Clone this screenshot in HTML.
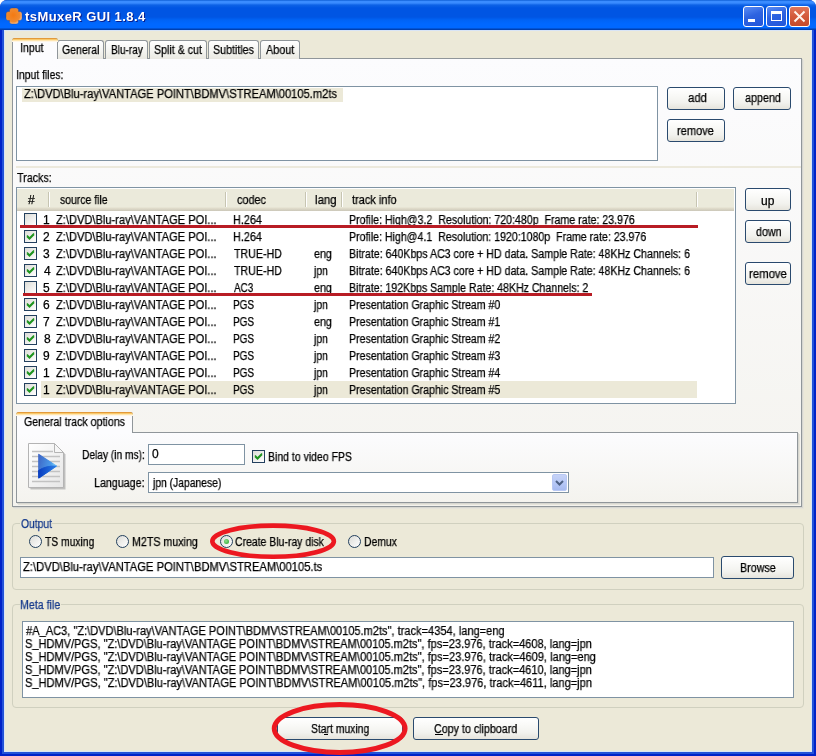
<!DOCTYPE html><html><head><meta charset="utf-8"><style>
*{margin:0;padding:0;box-sizing:border-box}
html,body{width:816px;height:756px;overflow:hidden;background:#fff}
body{position:relative;font-family:"Liberation Sans",sans-serif;font-size:11px;color:#000}
.a{position:absolute}
.t{position:absolute;white-space:pre;line-height:13px;font-size:12px;-webkit-text-stroke:0.25px #000;will-change:transform}
.btn{position:absolute;border:1px solid #2A4A6E;border-radius:3px;background:linear-gradient(180deg,#FFFFFF 0,#FAFAF8 30%,#F2F2EE 70%,#E6E4DC 100%)}
.tb{position:absolute;border:1px solid #7F93A3;background:#fff}
.grp{position:absolute;border:1px solid #D0D0BF;border-radius:4px}
.gap{position:absolute;height:3px;background:#ECE9D8}
.page{position:absolute;border:1px solid #90969A;background:linear-gradient(180deg,#FCFCFE 0,#F4F3EE 100%);box-shadow:1px 1px 0 #D6D6D0,2px 2px 0 #E6E4DA}
.tab{position:absolute;border:1px solid #90969A;border-bottom:none;border-radius:3px 3px 0 0;background:linear-gradient(180deg,#FFFFFF 0,#F3F3EF 60%,#EAE9E2 100%)}
.tabsel{position:absolute;border:1px solid #90969A;border-bottom:none;border-radius:3px 3px 0 0;background:#FCFCFE}
.tabsel:before{content:"";position:absolute;left:-1px;right:-1px;top:-1px;height:4px;background:linear-gradient(180deg,#E39A3A 0,#E39A3A 1px,#F9C86A 1px,#F9C86A 2px,#FFE6B0 2px,#FFE6B0 3px,#FFF6E6 3px);border-radius:3px 3px 0 0}
.cb{position:absolute;width:13px;height:13px;border:1px solid #23405E;background:linear-gradient(135deg,#DCDCD7 0,#FFFFFF 100%)}
.rd{position:absolute;width:13px;height:13px;border:1px solid #23405E;border-radius:50%;background:linear-gradient(135deg,#DCDCD7 0,#FFFFFF 100%)}
.sep{position:absolute;width:2px;border-left:1px solid #C7C5B2;border-right:1px solid #FFFFFF}
</style></head><body>
<div class="a" style="left:0;top:0;width:816px;height:756px;border-radius:7px 7px 0 0;background:#0022C8;"></div>
<div class="a" style="left:2px;top:20px;width:812px;height:734px;background:#2352D8"></div>
<div class="a" style="left:0;top:0;width:816px;height:30px;border-radius:7px 7px 0 0;background:linear-gradient(180deg,#0050C8 0,#3A8CFF 1px,#3A8CFF 3px,#0D62E6 5px,#0055E3 8px,#0055E3 17px,#0063F5 20px,#0068FF 24px,#0068FF 28px,#0040B0 29px,#0040B0 30px)"></div>
<div class="a" style="left:4px;top:30px;width:808px;height:722px;background:#ECE9D8;border:1px solid #D8E4F6"></div>
<svg class="a" style="left:5px;top:7px" width="18" height="18"><defs><radialGradient id="og" cx="0.45" cy="0.45" r="0.6"><stop offset="0" stop-color="#F47A12"/><stop offset="0.7" stop-color="#F08A30"/><stop offset="1" stop-color="#FFD0A8"/></radialGradient></defs>
<path d="M7 1 H11 Q13.5 1 13.5 3.5 V4.5 H14.5 Q17 4.5 17 7 V11 Q17 13.5 14.5 13.5 H13.5 V14.5 Q13.5 17 11 17 H7 Q4.5 17 4.5 14.5 V13.5 H3.5 Q1 13.5 1 11 V7 Q1 4.5 3.5 4.5 H4.5 V3.5 Q4.5 1 7 1 Z" fill="url(#og)" stroke="#1A3A8A" stroke-width="0.6" stroke-opacity="0.6"/></svg>
<div class="t" style="left:25px;top:7px;color:#fff;-webkit-text-stroke:0;font-weight:bold;font-size:13px;line-height:20px;letter-spacing:0.42px;text-shadow:1px 1px 0 #0A1E8C">tsMuxeR GUI 1.8.4</div>
<div class="a" style="left:743px;top:6px;width:21px;height:21px;border:1px solid #fff;border-radius:3px;background:linear-gradient(160deg,#5A8DF5 0,#2E63E0 45%,#2256DA 100%)"></div>
<div class="a" style="left:766px;top:6px;width:21px;height:21px;border:1px solid #fff;border-radius:3px;background:linear-gradient(160deg,#5A8DF5 0,#2E63E0 45%,#2256DA 100%)"></div>
<div class="a" style="left:789px;top:6px;width:21px;height:21px;border:1px solid #fff;border-radius:3px;background:linear-gradient(180deg,#E0765A 0,#D35A3A 50%,#C64A2A 100%)"></div>
<div class="a" style="left:748px;top:19px;width:7px;height:3px;background:#fff"></div>
<div class="a" style="left:771px;top:11px;width:11px;height:10px;border:1px solid #fff;border-top-width:3px"></div>
<svg class="a" style="left:789px;top:6px" width="21" height="21"><path d="M5.5 5.5 L15.5 15.5 M15.5 5.5 L5.5 15.5" stroke="#FFF4EC" stroke-width="2"/></svg>
<div class="page" style="left:12px;top:58px;width:790px;height:449px"></div>
<div class="tab" style="left:57px;top:40px;width:47px;height:19px"></div>
<div class="t" style="left:62.12px;top:44px;transform:scaleX(0.8780);transform-origin:0 0;">General</div>
<div class="tab" style="left:105px;top:40px;width:43px;height:19px"></div>
<div class="t" style="left:111.16px;top:44px;transform:scaleX(0.8378);transform-origin:0 0;">Blu-ray</div>
<div class="tab" style="left:149px;top:40px;width:58px;height:19px"></div>
<div class="t" style="left:154.11px;top:44px;transform:scaleX(0.8868);transform-origin:0 0;">Split &amp; cut</div>
<div class="tab" style="left:208px;top:40px;width:51px;height:19px"></div>
<div class="t" style="left:213.11px;top:44px;transform:scaleX(0.8889);transform-origin:0 0;">Subtitles</div>
<div class="tab" style="left:260px;top:40px;width:40px;height:19px"></div>
<div class="t" style="left:266.00px;top:44px;transform:scaleX(0.9032);transform-origin:0 0;">About</div>
<div class="tabsel" style="left:12px;top:38px;width:46px;height:21px"></div>
<div class="t" style="left:20.12px;top:42px;transform:scaleX(0.8846);transform-origin:0 0;">Input</div>
<div class="t" style="left:16.13px;top:69px;transform:scaleX(0.8679);transform-origin:0 0;">Input files:</div>
<div class="tb" style="left:16px;top:86px;width:642px;height:75px"></div>
<div class="a" style="left:22px;top:88px;width:321px;height:14px;background:#ECE9D8"></div>
<div class="t" style="left:24.00px;top:88px;transform:scaleX(0.9288);transform-origin:0 0;">Z:\DVD\Blu-ray\VANTAGE POINT\BDMV\STREAM\00105.m2ts</div>
<div class="btn" style="left:667px;top:87px;width:58px;height:23px"></div>
<div class="t" style="left:688.00px;top:92px;transform:scaleX(0.9474);transform-origin:0 0;">add</div>
<div class="btn" style="left:733px;top:87px;width:58px;height:23px"></div>
<div class="t" style="left:745.00px;top:92px;transform:scaleX(0.8974);transform-origin:0 0;">append</div>
<div class="btn" style="left:667px;top:119px;width:58px;height:23px"></div>
<div class="t" style="left:677.08px;top:125px;transform:scaleX(0.9211);transform-origin:0 0;">remove</div>
<div class="a" style="left:16px;top:166px;width:785px;height:2px;background:#ECE9DC"></div>
<div class="t" style="left:17.00px;top:172px;transform:scaleX(0.8947);transform-origin:0 0;">Tracks:</div>
<div class="tb" style="left:16px;top:187px;width:720px;height:217px"></div>
<div class="a" style="left:17px;top:188px;width:717px;height:23px;background:linear-gradient(180deg,#FFFFFF 0,#FFFFFF 1px,#EBEADB 1px,#EBEADB 19px,#E2DECD 20px,#CBC7B8 23px)"></div>
<div class="sep" style="left:48px;top:192px;height:15px"></div>
<div class="sep" style="left:225px;top:192px;height:15px"></div>
<div class="sep" style="left:305px;top:192px;height:15px"></div>
<div class="sep" style="left:341px;top:192px;height:15px"></div>
<div class="sep" style="left:696px;top:192px;height:15px"></div>
<div class="t" style="left:28.00px;top:194px;">#</div>
<div class="t" style="left:60.00px;top:194px;transform:scaleX(0.8704);transform-origin:0 0;">source file</div>
<div class="t" style="left:237.00px;top:194px;transform:scaleX(0.9062);transform-origin:0 0;">codec</div>
<div class="t" style="left:315.05px;top:194px;transform:scaleX(0.9524);transform-origin:0 0;">lang</div>
<div class="t" style="left:352.00px;top:194px;transform:scaleX(0.9167);transform-origin:0 0;">track info</div>
<div class="a" style="left:41px;top:381px;width:656px;height:17px;background:#ECE9D8"></div>
<div class="cb" style="left:24px;top:213px"></div>
<div class="t" style="left:43.00px;top:214px;">1</div>
<div class="t" style="left:56.00px;top:214px;transform:scaleX(0.9249);transform-origin:0 0;">Z:\DVD\Blu-ray\VANTAGE POI...</div>
<div class="t" style="left:233.10px;top:214px;transform:scaleX(0.9032);transform-origin:0 0;">H.264</div>
<div class="t" style="left:349.12px;top:214px;transform:scaleX(0.8847);transform-origin:0 0;">Profile: High@3.2  Resolution: 720:480p  Frame rate: 23.976</div>
<div class="cb" style="left:24px;top:230px"><svg width="13" height="13" style="position:absolute;left:-1px;top:-1px"><path d="M3 5.5 L5.5 8 L10 3.5 M3 6.5 L5.5 9 L10 4.5" fill="none" stroke="#1E941E" stroke-width="1.5"/></svg></div>
<div class="t" style="left:43.00px;top:231px;">2</div>
<div class="t" style="left:56.00px;top:231px;transform:scaleX(0.9249);transform-origin:0 0;">Z:\DVD\Blu-ray\VANTAGE POI...</div>
<div class="t" style="left:233.10px;top:231px;transform:scaleX(0.9032);transform-origin:0 0;">H.264</div>
<div class="t" style="left:349.12px;top:231px;transform:scaleX(0.8836);transform-origin:0 0;">Profile: High@4.1  Resolution: 1920:1080p  Frame rate: 23.976</div>
<div class="cb" style="left:24px;top:247px"><svg width="13" height="13" style="position:absolute;left:-1px;top:-1px"><path d="M3 5.5 L5.5 8 L10 3.5 M3 6.5 L5.5 9 L10 4.5" fill="none" stroke="#1E941E" stroke-width="1.5"/></svg></div>
<div class="t" style="left:43.00px;top:248px;">3</div>
<div class="t" style="left:56.00px;top:248px;transform:scaleX(0.9249);transform-origin:0 0;">Z:\DVD\Blu-ray\VANTAGE POI...</div>
<div class="t" style="left:234.00px;top:248px;transform:scaleX(0.8868);transform-origin:0 0;">TRUE-HD</div>
<div class="t" style="left:314.00px;top:248px;transform:scaleX(0.8947);transform-origin:0 0;">eng</div>
<div class="t" style="left:349.11px;top:248px;transform:scaleX(0.8854);transform-origin:0 0;">Bitrate: 640Kbps AC3 core + HD data. Sample Rate: 48KHz Channels: 6</div>
<div class="cb" style="left:24px;top:264px"><svg width="13" height="13" style="position:absolute;left:-1px;top:-1px"><path d="M3 5.5 L5.5 8 L10 3.5 M3 6.5 L5.5 9 L10 4.5" fill="none" stroke="#1E941E" stroke-width="1.5"/></svg></div>
<div class="t" style="left:44.00px;top:265px;">4</div>
<div class="t" style="left:56.00px;top:265px;transform:scaleX(0.9249);transform-origin:0 0;">Z:\DVD\Blu-ray\VANTAGE POI...</div>
<div class="t" style="left:234.00px;top:265px;transform:scaleX(0.8868);transform-origin:0 0;">TRUE-HD</div>
<div class="t" style="left:314.00px;top:265px;transform:scaleX(0.8667);transform-origin:0 0;">jpn</div>
<div class="t" style="left:349.11px;top:265px;transform:scaleX(0.8854);transform-origin:0 0;">Bitrate: 640Kbps AC3 core + HD data. Sample Rate: 48KHz Channels: 6</div>
<div class="cb" style="left:24px;top:281px"></div>
<div class="t" style="left:43.00px;top:282px;">5</div>
<div class="t" style="left:56.00px;top:282px;transform:scaleX(0.9249);transform-origin:0 0;">Z:\DVD\Blu-ray\VANTAGE POI...</div>
<div class="t" style="left:234.00px;top:282px;transform:scaleX(0.8261);transform-origin:0 0;">AC3</div>
<div class="t" style="left:314.00px;top:282px;transform:scaleX(0.8947);transform-origin:0 0;">eng</div>
<div class="t" style="left:349.12px;top:282px;transform:scaleX(0.8815);transform-origin:0 0;">Bitrate: 192Kbps Sample Rate: 48KHz Channels: 2</div>
<div class="cb" style="left:24px;top:298px"><svg width="13" height="13" style="position:absolute;left:-1px;top:-1px"><path d="M3 5.5 L5.5 8 L10 3.5 M3 6.5 L5.5 9 L10 4.5" fill="none" stroke="#1E941E" stroke-width="1.5"/></svg></div>
<div class="t" style="left:43.00px;top:299px;">6</div>
<div class="t" style="left:56.00px;top:299px;transform:scaleX(0.9249);transform-origin:0 0;">Z:\DVD\Blu-ray\VANTAGE POI...</div>
<div class="t" style="left:233.17px;top:299px;transform:scaleX(0.8333);transform-origin:0 0;">PGS</div>
<div class="t" style="left:314.00px;top:299px;transform:scaleX(0.8667);transform-origin:0 0;">jpn</div>
<div class="t" style="left:349.12px;top:299px;transform:scaleX(0.8824);transform-origin:0 0;">Presentation Graphic Stream #0</div>
<div class="cb" style="left:24px;top:315px"><svg width="13" height="13" style="position:absolute;left:-1px;top:-1px"><path d="M3 5.5 L5.5 8 L10 3.5 M3 6.5 L5.5 9 L10 4.5" fill="none" stroke="#1E941E" stroke-width="1.5"/></svg></div>
<div class="t" style="left:43.00px;top:316px;">7</div>
<div class="t" style="left:56.00px;top:316px;transform:scaleX(0.9249);transform-origin:0 0;">Z:\DVD\Blu-ray\VANTAGE POI...</div>
<div class="t" style="left:233.17px;top:316px;transform:scaleX(0.8333);transform-origin:0 0;">PGS</div>
<div class="t" style="left:314.00px;top:316px;transform:scaleX(0.8947);transform-origin:0 0;">eng</div>
<div class="t" style="left:349.12px;top:316px;transform:scaleX(0.8824);transform-origin:0 0;">Presentation Graphic Stream #1</div>
<div class="cb" style="left:24px;top:332px"><svg width="13" height="13" style="position:absolute;left:-1px;top:-1px"><path d="M3 5.5 L5.5 8 L10 3.5 M3 6.5 L5.5 9 L10 4.5" fill="none" stroke="#1E941E" stroke-width="1.5"/></svg></div>
<div class="t" style="left:44.00px;top:333px;">8</div>
<div class="t" style="left:56.00px;top:333px;transform:scaleX(0.9249);transform-origin:0 0;">Z:\DVD\Blu-ray\VANTAGE POI...</div>
<div class="t" style="left:233.17px;top:333px;transform:scaleX(0.8333);transform-origin:0 0;">PGS</div>
<div class="t" style="left:314.00px;top:333px;transform:scaleX(0.8667);transform-origin:0 0;">jpn</div>
<div class="t" style="left:349.12px;top:333px;transform:scaleX(0.8824);transform-origin:0 0;">Presentation Graphic Stream #2</div>
<div class="cb" style="left:24px;top:349px"><svg width="13" height="13" style="position:absolute;left:-1px;top:-1px"><path d="M3 5.5 L5.5 8 L10 3.5 M3 6.5 L5.5 9 L10 4.5" fill="none" stroke="#1E941E" stroke-width="1.5"/></svg></div>
<div class="t" style="left:43.00px;top:350px;">9</div>
<div class="t" style="left:56.00px;top:350px;transform:scaleX(0.9249);transform-origin:0 0;">Z:\DVD\Blu-ray\VANTAGE POI...</div>
<div class="t" style="left:233.17px;top:350px;transform:scaleX(0.8333);transform-origin:0 0;">PGS</div>
<div class="t" style="left:314.00px;top:350px;transform:scaleX(0.8667);transform-origin:0 0;">jpn</div>
<div class="t" style="left:349.12px;top:350px;transform:scaleX(0.8824);transform-origin:0 0;">Presentation Graphic Stream #3</div>
<div class="cb" style="left:24px;top:366px"><svg width="13" height="13" style="position:absolute;left:-1px;top:-1px"><path d="M3 5.5 L5.5 8 L10 3.5 M3 6.5 L5.5 9 L10 4.5" fill="none" stroke="#1E941E" stroke-width="1.5"/></svg></div>
<div class="t" style="left:43.00px;top:367px;">1</div>
<div class="t" style="left:56.00px;top:367px;transform:scaleX(0.9249);transform-origin:0 0;">Z:\DVD\Blu-ray\VANTAGE POI...</div>
<div class="t" style="left:233.17px;top:367px;transform:scaleX(0.8333);transform-origin:0 0;">PGS</div>
<div class="t" style="left:314.00px;top:367px;transform:scaleX(0.8667);transform-origin:0 0;">jpn</div>
<div class="t" style="left:349.12px;top:367px;transform:scaleX(0.8824);transform-origin:0 0;">Presentation Graphic Stream #4</div>
<div class="cb" style="left:24px;top:383px"><svg width="13" height="13" style="position:absolute;left:-1px;top:-1px"><path d="M3 5.5 L5.5 8 L10 3.5 M3 6.5 L5.5 9 L10 4.5" fill="none" stroke="#1E941E" stroke-width="1.5"/></svg></div>
<div class="t" style="left:43.00px;top:384px;">1</div>
<div class="t" style="left:56.00px;top:384px;transform:scaleX(0.9249);transform-origin:0 0;">Z:\DVD\Blu-ray\VANTAGE POI...</div>
<div class="t" style="left:233.17px;top:384px;transform:scaleX(0.8333);transform-origin:0 0;">PGS</div>
<div class="t" style="left:314.00px;top:384px;transform:scaleX(0.8667);transform-origin:0 0;">jpn</div>
<div class="t" style="left:349.12px;top:384px;transform:scaleX(0.8824);transform-origin:0 0;">Presentation Graphic Stream #5</div>
<div class="a" style="left:20px;top:225px;width:678px;height:3px;background:#B81C24"></div>
<div class="a" style="left:23px;top:293px;width:569px;height:3px;background:#B81C24"></div>
<div class="btn" style="left:745px;top:188px;width:46px;height:23px"></div>
<div class="t" style="left:761.00px;top:195px;">up</div>
<div class="btn" style="left:745px;top:220px;width:46px;height:23px"></div>
<div class="t" style="left:756.00px;top:226px;transform:scaleX(0.8929);transform-origin:0 0;">down</div>
<div class="btn" style="left:745px;top:262px;width:46px;height:23px"></div>
<div class="t" style="left:749.05px;top:268px;transform:scaleX(0.9474);transform-origin:0 0;">remove</div>
<div class="page" style="left:16px;top:432px;width:782px;height:71px"></div>
<div class="tabsel" style="left:16px;top:412px;width:117px;height:21px"></div>
<div class="t" style="left:24.12px;top:416px;transform:scaleX(0.8850);transform-origin:0 0;">General track options</div>
<svg class="a" style="left:26px;top:441px" width="42" height="50">
<defs><linearGradient id="pg" x1="0" y1="0" x2="1" y2="1"><stop offset="0" stop-color="#FFFFFF"/><stop offset="1" stop-color="#E6E6E6"/></linearGradient>
<linearGradient id="pl" x1="0" y1="0" x2="1" y2="0.3"><stop offset="0" stop-color="#3E66C6"/><stop offset="0.75" stop-color="#4A9BEA"/><stop offset="1" stop-color="#7CCBF6"/></linearGradient>
<linearGradient id="pd" x1="0" y1="0" x2="1" y2="0"><stop offset="0" stop-color="#0A3EC0"/><stop offset="1" stop-color="#2A7CE6"/></linearGradient></defs>
<path d="M4.5 4.5 H30.5 L39.5 13.5 V48.5 H4.5 Z" fill="#9A9A9A" opacity="0.55"/>
<path d="M3.5 3.5 H29.5 L38.5 12.5 V47.5 H3.5 Z" fill="#B0B0B0" opacity="0.5"/>
<path d="M2.5 2.5 H28.5 L37.5 11.5 V46.5 H2.5 Z" fill="url(#pg)" stroke="#B4B4B4" stroke-width="1"/>
<path d="M28.5 2.5 V11.5 H37.5 Z" fill="#F6F6F6" stroke="#B4B4B4" stroke-width="1"/>
<g stroke="#C2C2C2" stroke-width="1.3"><path d="M6 10.5 H27 M6 15.5 H34 M6 20.5 H34 M6 25.5 H34 M6 30.5 H34 M6 35.5 H34 M6 40.5 H34"/></g>
<path d="M12.8 13.4 L12.8 37 L30.4 25.1 Z" fill="url(#pl)" stroke="url(#pl)" stroke-width="1.2" stroke-linejoin="round"/>
<path d="M12.6 29.5 Q20 24.5 30.4 25.1 L12.8 37 Z" fill="url(#pd)" stroke="url(#pd)" stroke-width="1" stroke-linejoin="round"/>
</svg>
<div class="t" style="left:82.15px;top:449px;transform:scaleX(0.8472);transform-origin:0 0;">Delay (in ms):</div>
<div class="tb" style="left:148px;top:444px;width:97px;height:21px"></div>
<div class="t" style="left:152.00px;top:448px;">0</div>
<div class="cb" style="left:252px;top:450px"><svg width="13" height="13" style="position:absolute;left:-1px;top:-1px"><path d="M3 5.5 L5.5 8 L10 3.5 M3 6.5 L5.5 9 L10 4.5" fill="none" stroke="#1E941E" stroke-width="1.5"/></svg></div>
<div class="t" style="left:268.13px;top:451px;transform:scaleX(0.8737);transform-origin:0 0;">Bind to video FPS</div>
<div class="t" style="left:94.11px;top:477px;transform:scaleX(0.8909);transform-origin:0 0;">Language:</div>
<div class="tb" style="left:148px;top:472px;width:421px;height:21px"></div>
<div class="t" style="left:153.00px;top:477px;transform:scaleX(0.8608);transform-origin:0 0;">jpn (Japanese)</div>
<div class="a" style="left:552px;top:474px;width:15px;height:17px;border-radius:2px;background:linear-gradient(180deg,#C6D3F7 0,#B4C6F6 60%,#A6BAF0 100%);border:1px solid #B8C8F4"></div>
<svg class="a" style="left:552px;top:474px" width="15" height="17"><path d="M4 7 L7.5 10.5 L11 7" fill="none" stroke="#4D6185" stroke-width="2"/></svg>
<div class="grp" style="left:12px;top:523px;width:792px;height:67px"></div>
<div class="gap" style="left:20px;top:522px;width:32px"></div>
<div class="t" style="left:21.00px;top:518px;transform:scaleX(0.8611);transform-origin:0 0;color:#153A8C;-webkit-text-stroke-color:#153A8C">Output</div>
<div class="rd" style="left:29px;top:535px"></div>
<div class="t" style="left:45.00px;top:536px;transform:scaleX(0.8596);transform-origin:0 0;">TS muxing</div>
<div class="rd" style="left:116px;top:535px"></div>
<div class="t" style="left:132.11px;top:536px;transform:scaleX(0.8889);transform-origin:0 0;">M2TS muxing</div>
<div class="rd" style="left:220px;top:535px"><div class="a" style="left:3px;top:3px;width:5px;height:5px;border-radius:50%;background:radial-gradient(circle at 40% 40%,#8FE08F,#21A121)"></div></div>
<div class="t" style="left:235.13px;top:536px;transform:scaleX(0.8713);transform-origin:0 0;">Create Blu-ray disk</div>
<div class="rd" style="left:348px;top:535px"></div>
<div class="t" style="left:364.14px;top:536px;transform:scaleX(0.8649);transform-origin:0 0;">Demux</div>
<div class="tb" style="left:20px;top:557px;width:694px;height:21px"></div>
<div class="t" style="left:23.00px;top:561px;transform:scaleX(0.9344);transform-origin:0 0;">Z:\DVD\Blu-ray\VANTAGE POINT\BDMV\STREAM\00105.ts</div>
<div class="btn" style="left:721px;top:556px;width:73px;height:23px"></div>
<div class="t" style="left:740.11px;top:562px;transform:scaleX(0.8947);transform-origin:0 0;">Browse</div>
<svg class="a" style="left:206px;top:520px" width="135" height="44"><ellipse cx="67.1" cy="21.2" rx="60.8" ry="15.6" fill="none" stroke="#EC1820" stroke-width="4.6"/></svg>
<div class="grp" style="left:12px;top:604px;width:792px;height:104px"></div>
<div class="gap" style="left:20px;top:603px;width:41px"></div>
<div class="t" style="left:20.11px;top:599px;transform:scaleX(0.8864);transform-origin:0 0;color:#153A8C;-webkit-text-stroke-color:#153A8C">Meta file</div>
<div class="tb" style="left:22px;top:621px;width:772px;height:77px"></div>
<div class="t" style="left:26.00px;top:625px;transform:scaleX(0.9210);transform-origin:0 0;">#A<span style="position:relative;top:-1px">_</span>AC3, "Z:\DVD\Blu-ray\VANTAGE POINT\BDMV\STREAM\00105.m2ts", track=4354, lang=eng</div>
<div class="t" style="left:25.08px;top:638px;transform:scaleX(0.9202);transform-origin:0 0;">S<span style="position:relative;top:-1px">_</span>HDMV/PGS, "Z:\DVD\Blu-ray\VANTAGE POINT\BDMV\STREAM\00105.m2ts", fps=23.976, track=4608, lang=jpn</div>
<div class="t" style="left:25.08px;top:651px;transform:scaleX(0.9207);transform-origin:0 0;">S<span style="position:relative;top:-1px">_</span>HDMV/PGS, "Z:\DVD\Blu-ray\VANTAGE POINT\BDMV\STREAM\00105.m2ts", fps=23.976, track=4609, lang=eng</div>
<div class="t" style="left:25.08px;top:664px;transform:scaleX(0.9202);transform-origin:0 0;">S<span style="position:relative;top:-1px">_</span>HDMV/PGS, "Z:\DVD\Blu-ray\VANTAGE POINT\BDMV\STREAM\00105.m2ts", fps=23.976, track=4610, lang=jpn</div>
<div class="t" style="left:25.08px;top:677px;transform:scaleX(0.9217);transform-origin:0 0;">S<span style="position:relative;top:-1px">_</span>HDMV/PGS, "Z:\DVD\Blu-ray\VANTAGE POINT\BDMV\STREAM\00105.m2ts", fps=23.976, track=4611, lang=jpn</div>
<div class="btn" style="left:277px;top:717px;width:126px;height:23px"></div>
<div class="t" style="left:311.14px;top:723px;transform:scaleX(0.8636);transform-origin:0 0;">Start muxing</div>
<div class="a" style="left:324px;top:734px;width:4px;height:1px;background:#000"></div>
<div class="btn" style="left:413px;top:717px;width:126px;height:23px"></div>
<div class="t" style="left:434.11px;top:723px;transform:scaleX(0.8913);transform-origin:0 0;">Copy to clipboard</div>
<div class="a" style="left:435px;top:734px;width:8px;height:1px;background:#000"></div>
<svg class="a" style="left:268px;top:698px" width="144" height="58"><ellipse cx="71.65" cy="30.5" rx="65.4" ry="24" fill="none" stroke="#EC1820" stroke-width="5"/></svg>
</body></html>
